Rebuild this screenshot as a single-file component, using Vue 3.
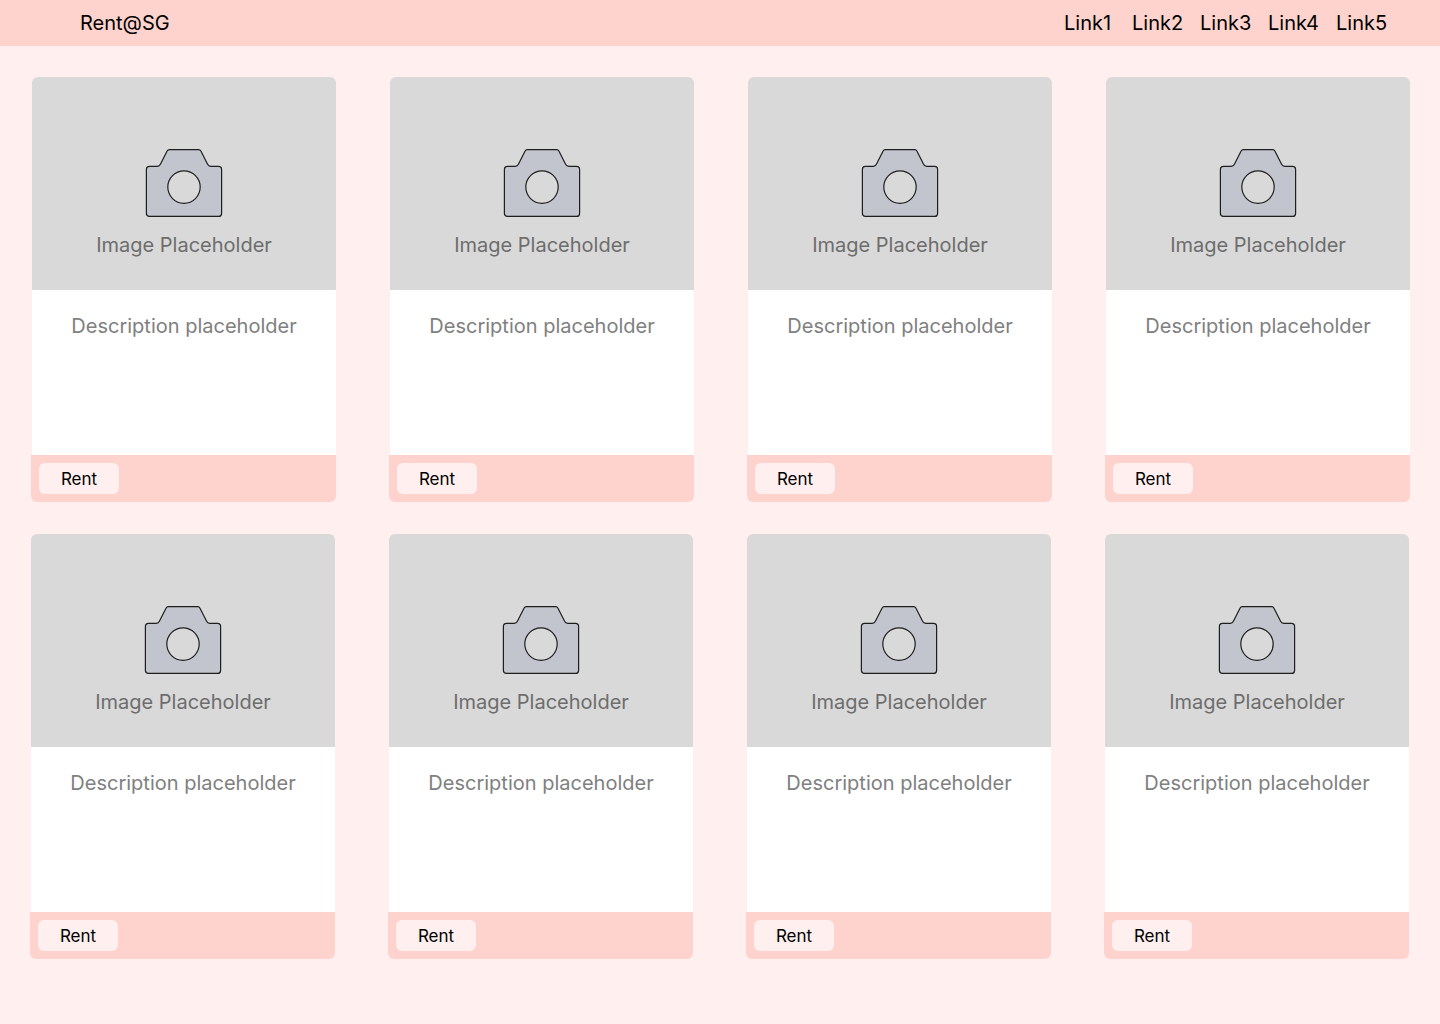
<script setup>
const links = ['Link1', 'Link2', 'Link3', 'Link4', 'Link5']
const shelves = [
  [1, 2, 3, 4],
  [5, 6, 7, 8],
]
</script>

<template>
  <div class="page">
    <header class="topbar">
      <a class="brand" href="#">Rent@SG</a>
      <nav class="links">
        <a v-for="link in links" :key="link" href="#">{{ link }}</a>
      </nav>
    </header>
    <main class="listing">
      <section v-for="(shelf, i) in shelves" :key="i" class="shelf">
        <article v-for="id in shelf" :key="id" class="card">
          <div class="photo">
            <svg class="camera" width="78" height="70" viewBox="0 0 78 70" aria-hidden="true">
              <path
                d="M4.5 18.3H12.2Q14.4 18.3 15.4 16.3L22 3.2Q22.9 1.6 24.2 1.6H53.8Q55.1 1.6 56 3.2L62.6 16.3Q63.6 18.3 65.8 18.3H73.5Q76.6 18.3 76.6 21.4V65.4Q76.6 68.4 73.5 68.4H4.5Q1.4 68.4 1.4 65.4V21.4Q1.4 18.3 4.5 18.3Z"
                fill="#c2c5cd"
                stroke="#1e1e1e"
                stroke-width="1.2"
              />
              <circle cx="39" cy="39.1" r="16.2" fill="#d9d9d9" stroke="#1e1e1e" stroke-width="1.2" />
            </svg>
            <span>Image Placeholder</span>
          </div>
          <p class="description">Description placeholder</p>
          <footer class="actions">
            <button type="button">Rent</button>
          </footer>
        </article>
      </section>
    </main>
  </div>
</template>

<style>
body {
  margin: 0;
  background: #fff0ef;
}
</style>

<style scoped>
.page {
  min-height: 100vh;
  background: #fff0ef;
  color: #000;
  font-family: Inter, sans-serif;
  font-size: 20px;
  line-height: 24px;
}

.topbar {
  display: flex;
  justify-content: space-between;
  align-items: center;
  padding: 11px 36px 11px 80px;
  background: #ffd3cd;
}

.topbar a {
  color: inherit;
  text-decoration: none;
}

.links {
  display: grid;
  grid-template-columns: repeat(5, 68px);
}

.listing {
  display: flex;
  flex-direction: column;
  gap: 32px;
  padding: 31px 0;
}

.shelf {
  display: grid;
  grid-template-columns: repeat(4, 1fr);
  gap: 53px;
  padding: 0 30px 0 31px;
}

.shelf:nth-child(even) {
  padding: 0 31px 0 30px;
}

.card {
  display: flex;
  flex-direction: column;
}

.photo {
  display: flex;
  flex-direction: column;
  align-items: center;
  gap: 15px;
  margin-left: 1px;
  padding: 71px 0 33px;
  border-radius: 6px 6px 0 0;
  background: #d9d9d9;
  color: #6d6d6d;
}

.camera {
  display: block;
}

.description {
  min-height: 129px;
  margin: 0 0 0 1px;
  padding: 24px 16px 12px;
  background: #fff;
  color: #808080;
  text-align: center;
}

.actions {
  display: flex;
  padding: 8px;
  border-radius: 0 0 6px 6px;
  background: #ffd3cd;
}

.actions button {
  width: 80px;
  height: 31px;
  padding: 0;
  border: 0;
  border-radius: 6px;
  background: #fff0ef;
  color: #000;
  font: 17px/20px Inter, sans-serif;
}
</style>
